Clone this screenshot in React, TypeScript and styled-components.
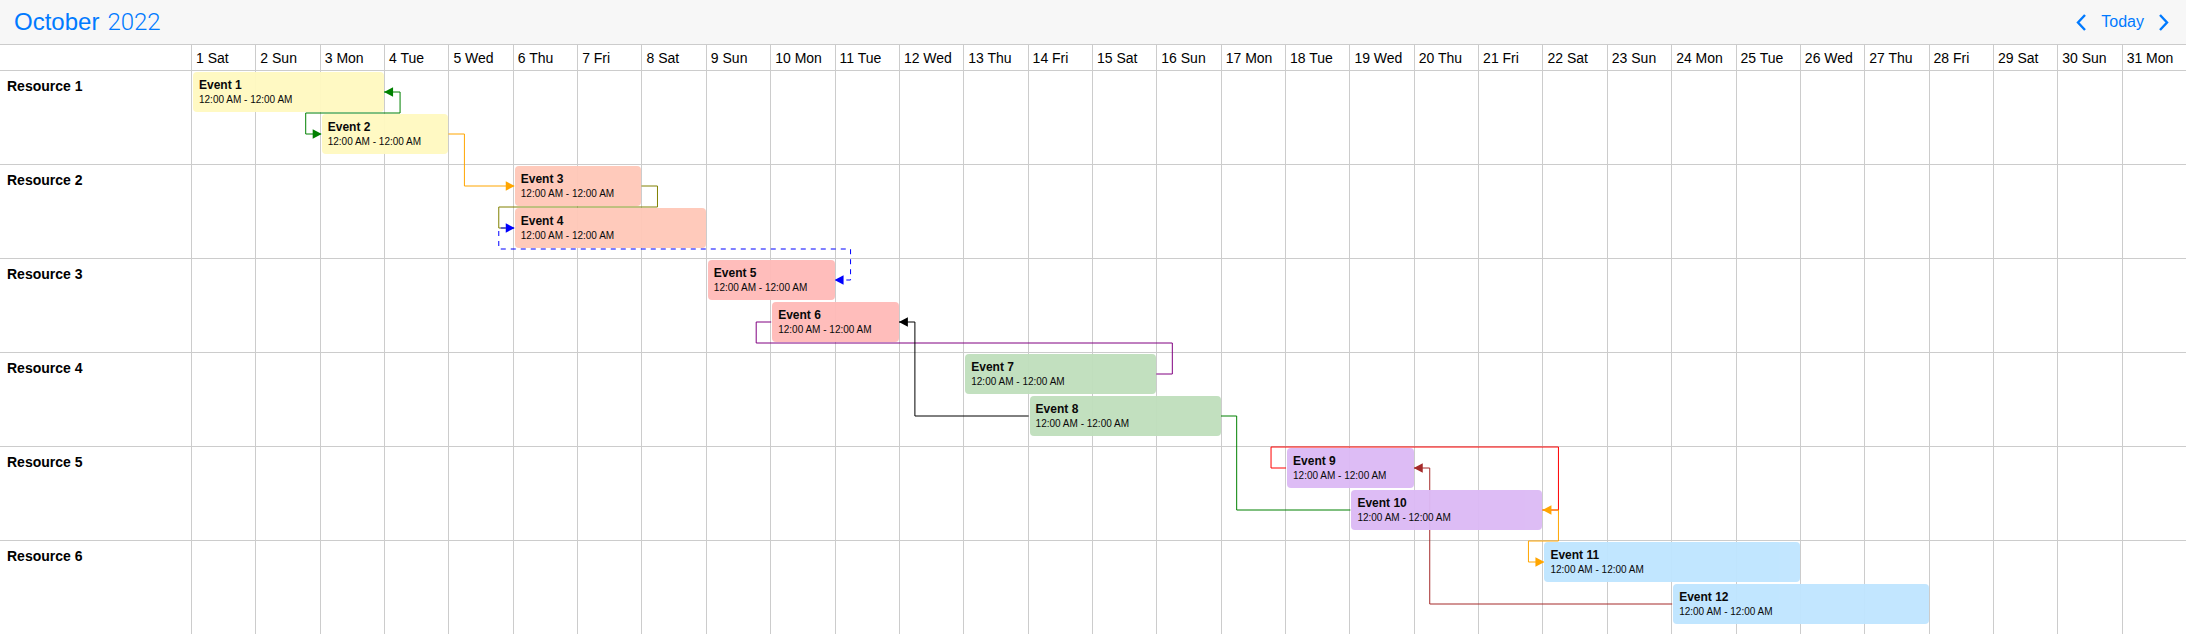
import React, { useLayoutEffect, useRef, useState } from "react";
import styled, { createGlobalStyle } from "styled-components";

const DAY_COUNT = 31;
const ROW_HEIGHT = 94;
const WEEKDAYS = ["Sat", "Sun", "Mon", "Tue", "Wed", "Thu", "Fri"];
const DAYS = Array.from({ length: DAY_COUNT }, (_, i) => `${i + 1} ${WEEKDAYS[i % 7]}`);

type CalendarEvent = { id: number; start: number; end: number };
type Resource = { id: number; color: string; events: CalendarEvent[] };

const RESOURCES: Resource[] = [
  { id: 1, color: "#fff9c1", events: [{ id: 1, start: 1, end: 4 }, { id: 2, start: 3, end: 5 }] },
  { id: 2, color: "#ffc8b9", events: [{ id: 3, start: 6, end: 8 }, { id: 4, start: 6, end: 9 }] },
  { id: 3, color: "#ffbbb9", events: [{ id: 5, start: 9, end: 11 }, { id: 6, start: 10, end: 12 }] },
  { id: 4, color: "#c0dfbd", events: [{ id: 7, start: 13, end: 16 }, { id: 8, start: 14, end: 17 }] },
  { id: 5, color: "#dcbaf5", events: [{ id: 9, start: 18, end: 20 }, { id: 10, start: 19, end: 22 }] },
  { id: 6, color: "#bfe5ff", events: [{ id: 11, start: 22, end: 26 }, { id: 12, start: 24, end: 28 }] },
];

type Side = "left" | "right";
type Anchor = { event: number; side: Side; arrow?: boolean };
type Link = { color: string; dashed?: boolean; from: Anchor; to: Anchor; via?: number };

/* `via` is the vertical distance from the first event's middle to the run between the two stubs. */
const LINKS: Link[] = [
  { color: "green", from: { event: 1, side: "right", arrow: true }, to: { event: 2, side: "left", arrow: true }, via: 21 },
  { color: "orange", from: { event: 2, side: "right" }, to: { event: 3, side: "left", arrow: true } },
  { color: "olive", from: { event: 3, side: "right" }, to: { event: 4, side: "left" }, via: 21 },
  { color: "blue", dashed: true, from: { event: 4, side: "left", arrow: true }, to: { event: 5, side: "right", arrow: true }, via: 21 },
  { color: "purple", from: { event: 6, side: "left" }, to: { event: 7, side: "right" }, via: 21 },
  { color: "black", from: { event: 8, side: "left" }, to: { event: 6, side: "right", arrow: true } },
  { color: "green", from: { event: 8, side: "right" }, to: { event: 10, side: "left" } },
  { color: "red", from: { event: 9, side: "left" }, to: { event: 10, side: "right" }, via: -21 },
  { color: "orange", from: { event: 10, side: "right", arrow: true }, to: { event: 11, side: "left", arrow: true }, via: 31 },
  { color: "brown", from: { event: 12, side: "left" }, to: { event: 9, side: "right", arrow: true } },
];

const GlobalStyle = createGlobalStyle`
  *, *::before, *::after { box-sizing: border-box; }
  body {
    margin: 0;
    background: #fff;
    color: #000;
    font-family: "Liberation Sans", Arial, Helvetica, sans-serif;
  }
`;

const Page = styled.main`
  overflow: hidden;
`;

const Toolbar = styled.header`
  display: flex;
  align-items: center;
  justify-content: space-between;
  height: 45px;
  padding: 0 12px 0 14px;
  background: #f7f7f7;
  border-bottom: 1px solid #ccc;
`;

const Title = styled.h1`
  display: flex;
  gap: 8px;
  margin: 0;
  color: #007aff;
  font-size: 24px;
  line-height: 28px;
  font-weight: 400;
`;

const Year = styled.span`
  font-family: Roboto, "Liberation Sans", sans-serif;
  font-weight: 300;
`;

const Nav = styled.nav`
  display: flex;
  align-items: center;
  gap: 4px;
`;

const NavButton = styled.button`
  display: flex;
  align-items: center;
  justify-content: center;
  min-width: 20px;
  height: 32px;
  padding: 0;
  border: 0;
  background: none;
  color: #007aff;
  font: inherit;
  font-size: 16px;
  cursor: pointer;
`;

const TodayButton = styled(NavButton)`
  padding: 0 6px;
`;

const Row = styled.div<{ $height: number }>`
  display: grid;
  grid-template-columns: 191px minmax(0, 1fr);
  height: ${(p) => p.$height}px;
  border-bottom: 1px solid #ccc;

  &:last-child { height: ${(p) => p.$height - 1}px; border-bottom: 0; }
`;

const DayGrid = styled.div`
  display: grid;
  grid-template-columns: repeat(${DAY_COUNT}, minmax(0, 1fr));
`;

const DayName = styled.div`
  padding-left: 4px;
  border-left: 1px solid #ccc;
  font-size: 14px;
  line-height: 26px;
  white-space: nowrap;
`;

const Body = styled.div`
  position: relative;
`;

const ResourceName = styled.h2`
  margin: 0;
  padding: 5px 7px;
  font-size: 14px;
  line-height: 20px;
  font-weight: 700;
`;

const Lanes = styled(DayGrid)`
  grid-template-rows: 40px 40px 1fr;
  row-gap: 2px;
  padding-top: 1px;
`;

const DayCell = styled.div<{ $day: number }>`
  grid-column: ${(p) => p.$day};
  grid-row: 1 / -1;
  margin-top: -1px;
  border-left: 1px solid #ccc;
`;

const EventCard = styled.article<{ $start: number; $end: number; $lane: number; $color: string }>`
  z-index: 2;
  grid-column: ${(p) => p.$start} / ${(p) => p.$end};
  grid-row: ${(p) => p.$lane};
  margin-left: 2px;
  padding: 5px 6px;
  border-radius: 4px;
  background: ${(p) => p.$color};
  opacity: 0.96;
  white-space: nowrap;
`;

const EventTitle = styled.h3`
  margin: 0;
  font-size: 12px;
  line-height: 16px;
  font-weight: 700;
`;

const EventTime = styled.p`
  margin: 0;
  font-size: 10px;
  line-height: 14px;
`;

const Connectors = styled.svg`
  position: absolute;
  top: 0;
  right: 0;
  width: calc(100% - 191px);
  height: 100%;
  z-index: 1;
  pointer-events: none;
`;

const locate = (id: number, side: Side, dayWidth: number) => {
  const row = RESOURCES.findIndex((r) => r.events.some((e) => e.id === id));
  const lane = RESOURCES[row].events.findIndex((e) => e.id === id);
  const event = RESOURCES[row].events[lane];
  const right = side === "right";
  const edge = right ? (event.end - 1) * dayWidth : (event.start - 1) * dayWidth + 1;
  return {
    x: edge,
    stub: edge + (right ? 16 : -15),
    y: row * ROW_HEIGHT + lane * 42 + 21,
  };
};

const Arrow = ({ x, y, side, color }: { x: number; y: number; side: Side; color: string }) => {
  const back = side === "right" ? x + 9 : x - 8;
  const tip = side === "right" ? x : x + 1;
  return <polygon points={`${tip},${y} ${back},${y - 4.75} ${back},${y + 4.75}`} fill={color} />;
};

const Connector = ({ link, dayWidth }: { link: Link; dayWidth: number }) => {
  const a = locate(link.from.event, link.from.side, dayWidth);
  const b = locate(link.to.event, link.to.side, dayWidth);
  const middle =
    link.via === undefined
      ? link.from.side === "right"
        ? `H${a.stub} V${b.y}`
        : `H${b.stub} V${b.y}`
      : `H${a.stub} V${a.y + link.via} H${b.stub} V${b.y}`;
  return (
    <g>
      <path
        d={`M${a.x},${a.y} ${middle} H${b.x}`}
        fill="none"
        stroke={link.color}
        strokeWidth={1}
        strokeDasharray={link.dashed ? "5 5" : undefined}
        strokeDashoffset={link.dashed ? 2 : undefined}
      />
      {link.from.arrow && <Arrow x={a.x} y={a.y} side={link.from.side} color={link.color} />}
      {link.to.arrow && <Arrow x={b.x} y={b.y} side={link.to.side} color={link.color} />}
    </g>
  );
};

const Chevron = ({ d }: { d: string }) => (
  <svg width="10" height="17" viewBox="0 0 10 17" fill="none" stroke="currentColor" strokeWidth="2.4" aria-hidden="true">
    <path d={d} />
  </svg>
);

export default function App() {
  const svgRef = useRef<SVGSVGElement>(null);
  const [width, setWidth] = useState(0);

  useLayoutEffect(() => {
    const svg = svgRef.current;
    if (!svg) return;
    const measure = () => setWidth(svg.getBoundingClientRect().width);
    measure();
    const observer = new ResizeObserver(measure);
    observer.observe(svg);
    return () => observer.disconnect();
  }, []);

  return (
    <Page>
      <GlobalStyle />
      <Toolbar>
        <Title>
          October <Year>2022</Year>
        </Title>
        <Nav>
          <NavButton type="button" aria-label="Previous month">
            <Chevron d="M9 1 L2 8.5 L9 16" />
          </NavButton>
          <TodayButton type="button">Today</TodayButton>
          <NavButton type="button" aria-label="Next month">
            <Chevron d="M1 1 L8 8.5 L1 16" />
          </NavButton>
        </Nav>
      </Toolbar>
      <Row $height={26}>
        <div />
        <DayGrid>
          {DAYS.map((day) => (
            <DayName key={day}>{day}</DayName>
          ))}
        </DayGrid>
      </Row>
      <Body>
        <Connectors ref={svgRef} aria-hidden="true">
          {LINKS.map((link, i) => (
            <Connector key={i} link={link} dayWidth={width / DAY_COUNT} />
          ))}
        </Connectors>
        {RESOURCES.map((resource) => (
          <Row key={resource.id} $height={ROW_HEIGHT}>
            <ResourceName>Resource {resource.id}</ResourceName>
            <Lanes>
              {DAYS.map((day, i) => (
                <DayCell key={day} $day={i + 1} />
              ))}
              {resource.events.map((event, i) => (
                <EventCard key={event.id} $start={event.start} $end={event.end} $lane={i + 1} $color={resource.color}>
                  <EventTitle>Event {event.id}</EventTitle>
                  <EventTime>12:00 AM - 12:00 AM</EventTime>
                </EventCard>
              ))}
            </Lanes>
          </Row>
        ))}
      </Body>
    </Page>
  );
}
